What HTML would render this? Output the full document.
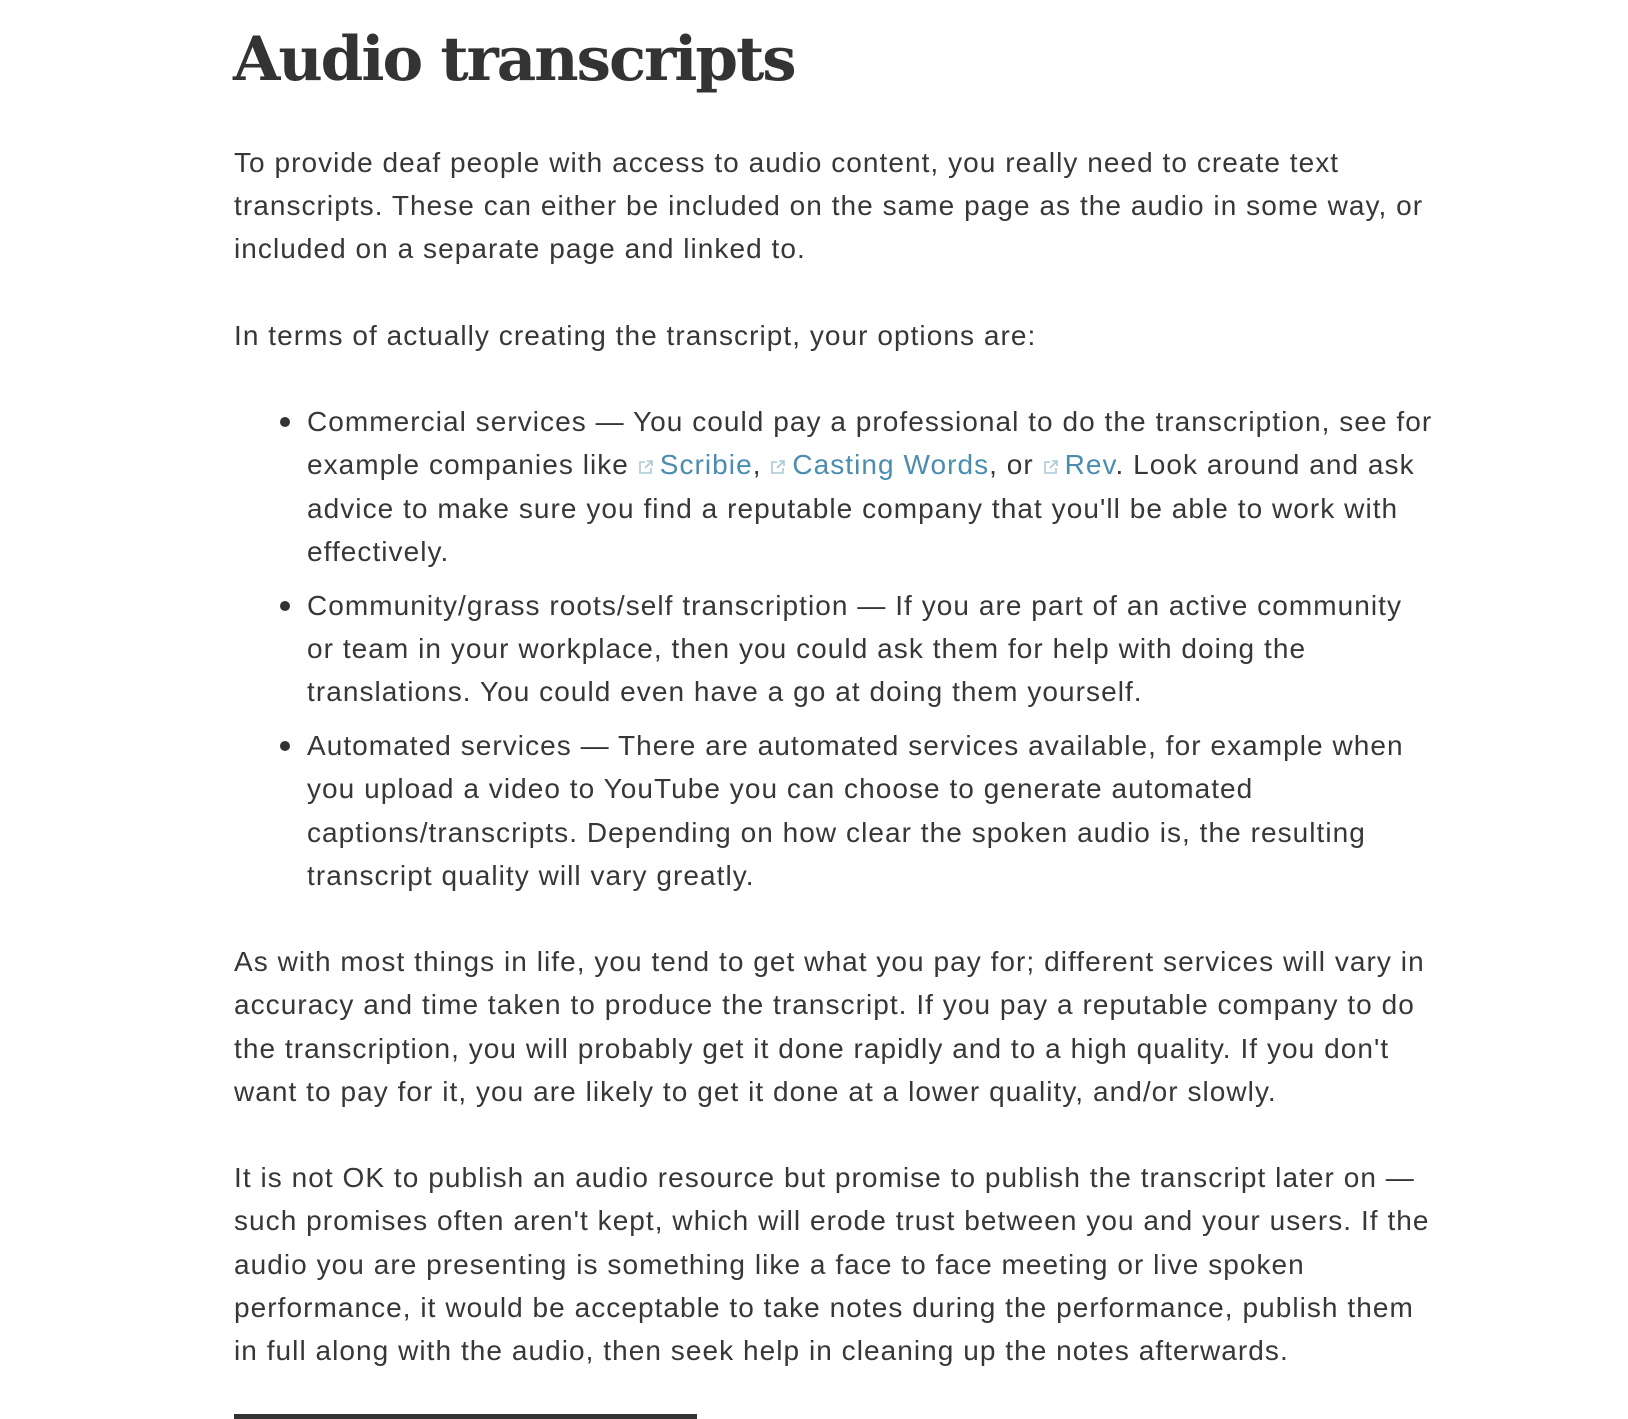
<!DOCTYPE html>
<html><head><meta charset="utf-8"><style>
html,body{margin:0;padding:0;background:#fff;width:1628px;height:1419px;overflow:hidden}
body{font-family:"Liberation Sans",Arial,sans-serif;color:#373737;font-size:28px;line-height:43.2px;letter-spacing:1.05px}
h1{position:absolute;left:233px;top:20px;margin:0;font-family:"DejaVu Serif","Liberation Serif",serif;font-weight:bold;font-size:61px;line-height:80px;letter-spacing:-2px;color:#333}
#c{position:absolute;left:234px;top:141px;width:1380px}
.l{white-space:nowrap;display:block}
p{margin:0 0 43.2px}
ul{margin:0 0 43.2px;padding:0;list-style:none}
li{position:relative;padding-left:73px;margin-bottom:10.8px}
li:last-child{margin-bottom:0}
li:before{content:"";position:absolute;left:46px;top:17px;width:10px;height:10px;border-radius:50%;background:#333}
a{color:#4a8db0;text-decoration:none}
svg.e{width:16px;height:16px;vertical-align:-1px;margin-right:6px}
#bar{position:absolute;left:234px;top:1414px;width:463px;height:5px;background:#333}
</style></head><body>
<h1>Audio transcripts</h1>
<div id="c">
<p><span class="l">To provide deaf people with access to audio content, you really need to create text</span><span class="l">transcripts. These can either be included on the same page as the audio in some way, or</span><span class="l">included on a separate page and linked to.</span></p>
<p><span class="l">In terms of actually creating the transcript, your options are:</span></p>
<ul>
<li><span class="l">Commercial services — You could pay a professional to do the transcription, see for</span><span class="l">example companies like <svg class="e" viewBox="0 0 16 16"><path d="M7 3H2v11h11V9M9 2h5v5M14 2L7 9" fill="none" stroke="#a9c9d9" stroke-width="1.6"/></svg><a>Scribie</a>, <svg class="e" viewBox="0 0 16 16"><path d="M7 3H2v11h11V9M9 2h5v5M14 2L7 9" fill="none" stroke="#a9c9d9" stroke-width="1.6"/></svg><a>Casting Words</a>, or <svg class="e" viewBox="0 0 16 16"><path d="M7 3H2v11h11V9M9 2h5v5M14 2L7 9" fill="none" stroke="#a9c9d9" stroke-width="1.6"/></svg><a>Rev</a>. Look around and ask</span><span class="l">advice to make sure you find a reputable company that you'll be able to work with</span><span class="l">effectively.</span></li>
<li><span class="l">Community/grass roots/self transcription — If you are part of an active community</span><span class="l">or team in your workplace, then you could ask them for help with doing the</span><span class="l">translations. You could even have a go at doing them yourself.</span></li>
<li><span class="l">Automated services — There are automated services available, for example when</span><span class="l">you upload a video to YouTube you can choose to generate automated</span><span class="l">captions/transcripts. Depending on how clear the spoken audio is, the resulting</span><span class="l">transcript quality will vary greatly.</span></li>
</ul>
<p><span class="l">As with most things in life, you tend to get what you pay for; different services will vary in</span><span class="l">accuracy and time taken to produce the transcript. If you pay a reputable company to do</span><span class="l">the transcription, you will probably get it done rapidly and to a high quality. If you don't</span><span class="l">want to pay for it, you are likely to get it done at a lower quality, and/or slowly.</span></p>
<p><span class="l">It is not OK to publish an audio resource but promise to publish the transcript later on —</span><span class="l">such promises often aren't kept, which will erode trust between you and your users. If the</span><span class="l">audio you are presenting is something like a face to face meeting or live spoken</span><span class="l">performance, it would be acceptable to take notes during the performance, publish them</span><span class="l">in full along with the audio, then seek help in cleaning up the notes afterwards.</span></p>
</div>
<div id="bar"></div>
</body></html>
